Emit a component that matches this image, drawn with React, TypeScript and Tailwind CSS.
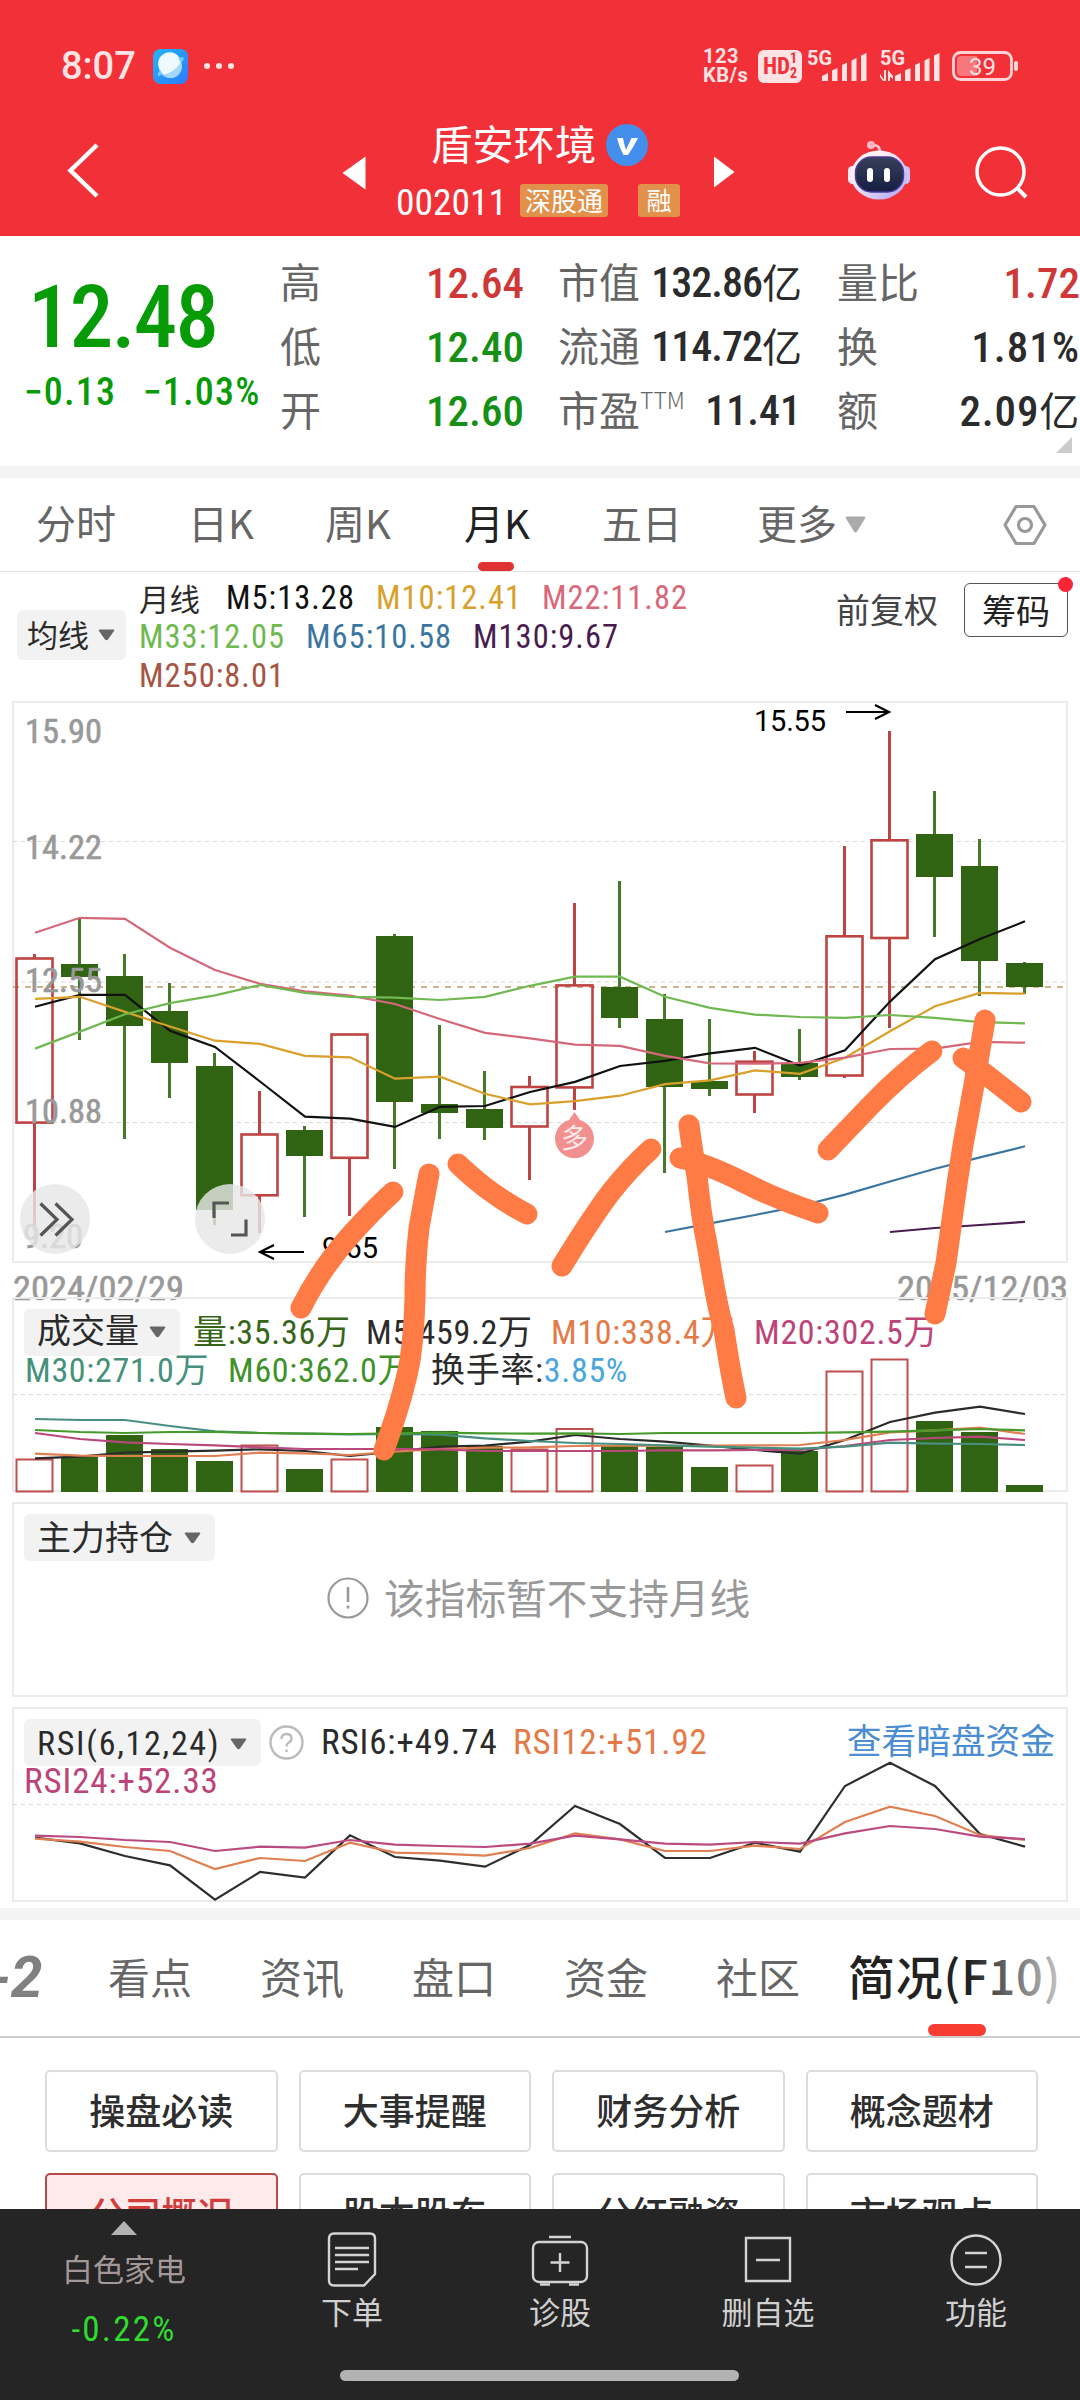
import type { ReactNode } from "react";

type Candle = {
  up: boolean;
  high: number;
  top: number;
  bottom: number;
  low: number;
};

type Legend = { label: string; className: string };

const up = (high: number, top: number, bottom: number, low: number): Candle => ({ up: true, high, top, bottom, low });
const down = (high: number, top: number, bottom: number, low: number): Candle => ({ up: false, high, top, bottom, low });

const candles: Candle[] = [
  up(954, 958.5, 1122.6, 1231),
  down(918, 964, 977, 1040),
  down(954, 976, 1026, 1139),
  down(983, 1011, 1063, 1098),
  down(1053, 1066, 1210, 1225),
  up(1091, 1134.5, 1195.3, 1233),
  down(1126, 1130, 1156, 1217),
  up(1034.5, 1034.5, 1157.8, 1216),
  down(934, 936, 1102, 1169),
  down(1025, 1104, 1113, 1139),
  down(1071, 1109, 1128, 1140),
  up(1076, 1087, 1126.5, 1180),
  up(903, 985.4, 1087.4, 1110),
  down(881, 987, 1018, 1028),
  down(994, 1019, 1087, 1173),
  down(1019, 1081, 1089, 1096),
  up(1051, 1061.7, 1094.5, 1113),
  down(1029, 1063, 1077, 1080),
  up(846, 936.3, 1075.5, 1078),
  up(731, 840.3, 938, 1028),
  down(791, 834, 877, 937),
  down(839, 866, 961, 996),
  down(962, 963, 987, 994),
];

const priceLines = [
  { color: "#111111", from: 0, ys: [1006.7, 994.9, 994.9, 1030.8, 1047, 1081.5, 1116.6, 1118.6, 1126.9, 1106.8, 1106, 1092, 1081.9, 1066, 1060.9, 1053.4, 1047.8, 1065.6, 1050.2, 1001.6, 959.3, 939.1, 921.3] },
  { color: "#d9a02c", from: 0, ys: [998.8, 996.8, 1011.9, 1026.5, 1040.7, 1043.9, 1055.8, 1057.3, 1078.7, 1076.7, 1093.7, 1104.4, 1101.2, 1095.7, 1084.2, 1080.3, 1070.4, 1073.9, 1057.7, 1031.2, 1006.3, 992.9, 993.7] },
  { color: "#d4687a", from: 0, ys: [932.8, 917.8, 918.9, 947.8, 970, 983.8, 991.3, 995.7, 1004, 1019, 1032.8, 1038.4, 1044.7, 1045.9, 1055.8, 1063.3, 1063.7, 1062.9, 1057.7, 1049, 1048.6, 1041.9, 1042.7] },
  { color: "#6fb950", from: 0, ys: [1048.6, 1031.6, 1014.2, 1003.2, 995.3, 985, 992.9, 996.8, 997.6, 1000, 996.8, 985.8, 976.7, 976.7, 996.8, 1007.9, 1014.6, 1017, 1017.8, 1015, 1017.8, 1022.1, 1023.3] },
  { color: "#3b76a0", from: 14, ys: [1232, 1223.4, 1215, 1206, 1194.6, 1181.5, 1168.8, 1157.4, 1146.3] },
  { color: "#4a1c50", from: 19, ys: [1232, 1228, 1225, 1221.8] },
];

const volumeTops = [1459, 1457, 1435, 1449, 1461, 1445, 1469, 1459, 1427, 1431, 1446, 1449, 1428.5, 1446, 1447, 1467, 1465, 1451, 1371, 1359, 1421, 1432, 1485];

const volumeLines = [
  { color: "#2b2b2b", ys: [595, 590, 578, 575, 572, 568, 573, 588, 575, 560, 557, 545, 525, 537, 545, 557, 570, 581, 540, 486, 458, 440, 462] },
  { color: "#e07f52", ys: [581, 587, 588, 588, 588, 578, 580, 585, 575, 567, 563, 562, 558, 557, 558, 557, 556, 555, 540, 517, 511, 503, 522] },
  { color: "#b9497c", ys: [519, 537, 547, 552, 556, 562, 567, 567, 567, 568, 573, 573, 573, 573, 571, 571, 570, 570, 558, 540, 534, 530, 540] },
  { color: "#478f80", ys: [477, 480, 480, 498, 514, 519, 521, 523, 522, 524, 535, 543, 549, 552, 556, 560, 563, 566, 560, 548, 551, 552, 555] },
  { color: "#469a2c", ys: [510, 516, 519, 516, 516, 519, 521, 522, 520, 518, 520, 521, 520, 522, 519, 519, 519, 519, 517, 515, 511, 507, 511] },
].map((line) => ({ ...line, from: 0, ys: line.ys.map((y) => 1260 + y / 3) }));

const rsiLines = [
  { color: "#2e2e2e", ys: [443, 460, 498, 526, 629, 546, 563, 436, 501, 512, 530, 465, 348, 402, 504, 504, 458, 485, 288, 218, 288, 432, 470] },
  { color: "#e07f52", ys: [446, 455, 471, 483, 537, 504, 513, 458, 488, 491, 497, 474, 430, 448, 483, 483, 467, 477, 396, 350, 378, 435, 450] },
  { color: "#bb4a80", ys: [437, 441, 450, 456, 483, 470, 473, 450, 464, 468, 471, 461, 437, 448, 461, 464, 456, 461, 430, 408, 417, 440, 447] },
].map((line) => ({ ...line, from: 0, ys: line.ys.map((y) => 1690 + y / 3) }));

const strokes = [
  "M393 1192 Q372 1211 349 1237 Q320 1270 301 1308",
  "M429 1174 Q423 1205 419 1228 Q415 1262 415 1297 Q414 1335 410 1360 Q404 1395 384 1450",
  "M458 1164 Q490 1195 527 1214",
  "M651 1149 Q630 1168 611 1192 Q590 1220 562 1266",
  "M689 1125 Q693 1155 697 1176 Q701 1215 707 1244 L711 1268 Q718 1310 724 1330 Q730 1370 736 1398",
  "M680 1158 Q705 1163 743 1182 Q778 1200 818 1213",
  "M932 1051 Q900 1075 871 1105 L828 1150",
  "M985 1020 L974 1085 L963 1145 L957 1184 L946 1263 L935 1314",
  "M963 1058 L984 1073 L1021 1102",
];

const periods = [
  { label: "分时", className: "w-[152px]" },
  { label: "日K", className: "w-[137px]" },
  { label: "周K", className: "w-[139px]" },
  { label: "月K", className: "w-[138px] text-[#222]" },
  { label: "五日", className: "w-[155px]" },
];

const maRows: Legend[][] = [
  [
    { label: "M5:13.28", className: "w-[150px] text-[#111]" },
    { label: "M10:12.41", className: "w-[166px] text-[#d9a02c]" },
    { label: "M22:11.82", className: "text-[#d9687a]" },
  ],
  [
    { label: "M33:12.05", className: "w-[167px] text-[#6fb950]" },
    { label: "M65:10.58", className: "w-[167px] text-[#3b76a0]" },
    { label: "M130:9.67", className: "text-[#4a1c50]" },
  ],
  [{ label: "M250:8.01", className: "text-[#a65545]" }],
];

const infoTabs = ["看点", "资讯", "盘口", "资金", "社区"];
const topics = ["操盘必读", "大事提醒", "财务分析", "概念题材", "公司概况", "股本股东", "分红融资", "市场观点"];

const candleX = (i: number) => 34.5 + i * 45;

function Lines({ lines }: { lines: { color: string; from: number; ys: number[] }[] }) {
  return (
    <>
      {lines.map((line) => (
        <polyline
          key={line.color}
          points={line.ys.map((y, i) => `${candleX(line.from + i) + 0.5},${y}`).join(" ")}
          fill="none"
          stroke={line.color}
          strokeWidth={2.2}
        />
      ))}
    </>
  );
}

function Caret() {
  return (
    <svg width="17" height="12" viewBox="0 0 17 12">
      <path d="M1.500 .5H15.500Q17 .5 16 2L10 10.500Q8.500 12 7 10.500L1 2Q0 .5 1.500 .5Z" fill="#666" />
    </svg>
  );
}

function Pill({ children, className }: { children: ReactNode; className: string }) {
  return (
    <div className={`flex h-[47px] items-center justify-between rounded-md bg-[#f2f2f2] pl-[13px] pr-[14px] text-[34px] text-[#2b2b2b] ${className}`}>
      <span className="-mt-[3px] leading-none">{children}</span>
      <Caret />
    </div>
  );
}

function Signal({ data }: { data?: boolean }) {
  return (
    <svg className="overflow-visible" width="60" height="32" viewBox="0 0 60 32" fill="#ffe3e4">
      <text x="0" y="15" fontSize="20" fontWeight="700" textLength="25" lengthAdjust="spacingAndGlyphs">5G</text>
      <path d="M15 31V26L21 23V31ZM25 31V20.500L30.500 18V31ZM35 31V15L40 12.500V31ZM44.500 31V10.500L49.500 8V31ZM54 31V5.500L59.500 3V31Z" />
      {data && <path d="M0 24L4 30V20H6V31H3L0 27ZM8 31V20L13 26V29L10 26.500V31Z" />}
    </svg>
  );
}

function StatusBar() {
  return (
    <div className="flex h-[96px] items-center pl-[61px] pr-[61px] pt-[36px] text-[#ffe3e4]">
      <span className="w-[92px] font-['Roboto'] text-[38px] font-medium leading-none">8:07</span>
      <svg width="35" height="35" viewBox="0 0 35 35">
        <defs>
          <linearGradient id="planet" x1="0" y1="0" x2="1" y2="1">
            <stop offset="0" stopColor="#25b4f8" />
            <stop offset="1" stopColor="#2b7bff" />
          </linearGradient>
        </defs>
        <rect width="35" height="35" rx="7.500" fill="url(#planet)" />
        <circle cx="17.500" cy="17.500" r="11.500" fill="#a4d8fb" />
        <path d="M7 21A11.500 11.500 0 1 1 28 13Q25 18 20 21.500Q14 26 9.500 25Z" fill="#eefaff" />
        <path d="M5 27Q4 25 7 21L9.500 25Q7 27 5 27ZM25 9Q30 7.500 31 9Q31 11 28 14Z" fill="#79cdf9" />
      </svg>
      <div className="ml-[16px] flex gap-[6px]">
        <i className="size-[6px] rounded-full bg-[#ffe3e4]" />
        <i className="size-[6px] rounded-full bg-[#ffe3e4]" />
        <i className="size-[6px] rounded-full bg-[#ffe3e4]" />
      </div>
      <div className="ml-auto flex w-[55px] flex-col font-['Roboto'] text-[20px] font-bold leading-[19px] tracking-[0.500px]">
        <span>123</span>
        <span>KB/s</span>
      </div>
      <div className="flex h-[33px] w-[44px] items-center justify-center rounded-md bg-[#ffe3e4] font-['Roboto_Condensed'] text-[23px] font-bold leading-none text-[#f13038]">
        <span>HD</span>
        <span className="flex flex-col text-[14px] leading-[15px]">
          <span>1</span>
          <span>2</span>
        </span>
      </div>
      <div className="ml-[5px] flex gap-[13px] font-['Roboto']">
        <Signal />
        <Signal data />
      </div>
      <svg className="ml-[12px]" width="67" height="30" viewBox="0 0 67 30">
        <rect x="1.500" y="1.500" width="58" height="27" rx="7" fill="none" stroke="#ffd4d6" strokeWidth="2.800" />
        <path d="M9 5H25V25H9Q5 25 5 21V9Q5 5 9 5Z" fill="#f7777c" />
        <rect x="62" y="10" width="4" height="10" rx="2" fill="#ffd4d6" />
        <text x="30.500" y="23.500" fontSize="24" textAnchor="middle" fill="#ffe3e4" className="font-['Roboto']">39</text>
      </svg>
    </div>
  );
}

function Robot() {
  return (
    <svg width="64" height="60" viewBox="0 0 64 60">
      <defs>
        <linearGradient id="shell" x1="0" y1="0" x2="1" y2="1">
          <stop offset="0.300" stopColor="#fff0f6" />
          <stop offset="0.900" stopColor="#b5aef5" />
        </linearGradient>
        <linearGradient id="visor" x1="0" y1="0" x2="0" y2="1">
          <stop offset="0" stopColor="#38405a" />
          <stop offset="1" stopColor="#151e42" />
        </linearGradient>
      </defs>
      <path d="M24 5Q33 4 33 12" fill="none" stroke="#ffc9d6" strokeWidth="2.500" />
      <circle cx="24" cy="5" r="4" fill="#ffb5c4" />
      <rect x="1" y="26" width="9" height="18" rx="4.500" fill="#f8e6fb" />
      <rect x="54" y="26" width="9" height="18" rx="4.500" fill="#c8c2fb" />
      <ellipse cx="32" cy="35" rx="28" ry="24.500" fill="url(#shell)" />
      <rect x="8.500" y="17" width="48" height="35" rx="16" fill="url(#visor)" stroke="#4a3a9b" strokeWidth="1.500" />
      <rect x="20" y="28" width="6" height="14" rx="3" fill="#fff" />
      <rect x="37" y="28" width="6" height="14" rx="3" fill="#fff" />
    </svg>
  );
}

function TitleBar() {
  return (
    <div className="flex h-[140px] text-white">
      <svg className="ml-[66px] mt-[46px]" width="34" height="56" viewBox="0 0 34 56">
        <path d="M31 3L4.500 28.500L31 54" fill="none" stroke="#fff" strokeWidth="4.500" />
      </svg>
      <svg className="ml-[242px] mt-[60px]" width="24" height="34" viewBox="0 0 24 34">
        <path d="M0.500 17L23.500 .5V33.500Z" fill="#fff" />
      </svg>
      <div className="ml-[30px] mt-[24px] w-[308px]">
        <div className="flex h-[50px] items-center pl-[35px]">
          <span className="-mt-[5px] text-[41.300px] leading-none">盾安环境</span>
          <svg className="ml-[10px]" width="42" height="42" viewBox="0 0 42 42">
            <circle cx="21" cy="21" r="21" fill="#448fec" />
            <path d="M11 14H17Q18 20 20 26Q23 19 25.500 14H32Q27 24 22 31H17.500Q13 23 11 14Z" fill="#fff" />
          </svg>
        </div>
        <div className="mt-[14px] flex h-[33px] items-center">
          <span className="mt-[5px] w-[124px] font-['Roboto_Condensed'] text-[37.500px] leading-none">002011</span>
          <span className="flex h-[33px] w-[88px] items-center justify-center rounded-[3px] bg-[#e2914b] pb-[2px] text-[26px] leading-none">深股通</span>
          <span className="ml-[30px] flex h-[33px] w-[42px] items-center justify-center rounded-[3px] bg-[#e2914b] pb-[2px] text-[25px] leading-none">融</span>
        </div>
      </div>
      <svg className="ml-[10px] mt-[60px]" width="21" height="32" viewBox="0 0 21 32">
        <path d="M20.500 16L0 .5V31.500Z" fill="#fff" />
      </svg>
      <div className="ml-[112px] mt-[44px]">
        <Robot />
      </div>
      <svg className="ml-[64px] mt-[50px]" width="54" height="54" viewBox="0 0 54 54">
        <circle cx="25.500" cy="25.500" r="23.500" fill="none" stroke="#fff" strokeWidth="3.500" />
        <path d="M42 42L51 51" stroke="#fff" strokeWidth="4" />
      </svg>
    </div>
  );
}

function Stat({ label, value, unit, sup, className }: { label: string; value: string; unit?: string; sup?: string; className: string }) {
  return (
    <div className="flex h-[64px] items-center justify-between whitespace-nowrap">
      <span className="-mt-[5px] flex text-[41px] leading-none text-[#666]">
        {label}
        {sup && <sup className="top-0 text-[23px] font-light leading-[22px]">{sup}</sup>}
      </span>
      <span className={`flex items-center font-['Roboto_Condensed','Noto_Sans_CJK_SC',sans-serif] leading-none font-medium ${className}`}>
        {value}
        {unit && <span className="-mt-[5px] font-['Noto_Sans_CJK_SC'] text-[40px] font-normal">{unit}</span>}
      </span>
    </div>
  );
}

function Quote() {
  return (
    <section className="relative flex h-[230px] pt-[15px]">
      <div className="w-[280px] whitespace-nowrap pl-[24px] font-['Roboto_Condensed'] font-medium text-[#079b07]">
        <div className="mt-[23px] pl-[4px] text-[87px] leading-[86px] tracking-[-1.800px]">12.48</div>
        <div className="mt-[10px] flex text-[38px] leading-[44px] tracking-[1.200px]">
          <span className="w-[119px]">−0.13</span>
          <span>−1.03%</span>
        </div>
      </div>
      <div className="w-[244px]">
        <Stat label="高" value="12.64" className="text-[43px] text-[#cf3836]" />
        <Stat label="低" value="12.40" className="text-[43px] text-[#168f16]" />
        <Stat label="开" value="12.60" className="text-[43px] text-[#168f16]" />
      </div>
      <div className="ml-[34px] w-[243px]">
        <Stat label="市值" value="132.86" unit="亿" className="text-[42px] tracking-[-1px] text-[#2b2b2b]" />
        <Stat label="流通" value="114.72" unit="亿" className="text-[42px] tracking-[-1px] text-[#2b2b2b]" />
        <Stat label="市盈" sup="TTM" value="11.41" className="text-[42px] text-[#2b2b2b]" />
      </div>
      <div className="ml-[36px] w-[243px]">
        <Stat label="量比" value="1.72" className="text-[43px] text-[#cf3836]" />
        <Stat label="换" value="1.81%" className="text-[43px] tracking-[1px] text-[#2b2b2b]" />
        <Stat label="额" value="2.09" unit="亿" className="text-[43px] tracking-[0.800px] text-[#2b2b2b]" />
      </div>
      <svg className="absolute bottom-[13px] right-[8px]" width="16" height="16" viewBox="0 0 16 16">
        <path d="M16 0V16H0Z" fill="#ccc" />
      </svg>
    </section>
  );
}

function PeriodTabs() {
  return (
    <nav className="flex h-[94px] items-center border-b-[1.500px] border-[#e4e4e4] pl-[36px] text-[40px] text-[#666]">
      {periods.map((item) => (
        <div key={item.label} className={`relative flex h-[94px] items-center pb-[5px] ${item.className}`}>
          {item.label}
          {item.label === "月K" && <span className="absolute bottom-px left-[14px] h-[9px] w-[36px] rounded-full bg-[#e03232]" />}
        </div>
      ))}
      <span className="pb-[5px]">更多</span>
      <svg className="ml-[8px]" width="21" height="17" viewBox="0 0 21 17">
        <path d="M2 .5H19Q21 .5 20 2.500L12 15.500Q10.500 17.500 9 15.500L1 2.500Q0 .5 2 .5Z" fill="#aaa" />
      </svg>
      <svg className="ml-[137px]" width="44" height="42" viewBox="0 0 44 42" fill="none" stroke="#999" strokeWidth="3.200">
        <path d="M13 2.500H31L42 21L31 39.500H13L2 21Z" strokeLinejoin="round" />
        <circle cx="22" cy="21" r="6.500" />
      </svg>
    </nav>
  );
}

function AverageBar() {
  return (
    <section className="flex h-[130px] pl-[17px]">
      <div className="mt-[39px] flex h-[50px] w-[109px] items-center justify-between rounded-md bg-[#f2f2f2] pl-[10px] pr-[11px] text-[31px] text-[#2b2b2b]">
        <span className="-mt-[3px] leading-none">均线</span>
        <Caret />
      </div>
      <div className="ml-[13px] mt-[8px] w-[697px] font-['Roboto_Condensed'] text-[32.500px] tracking-[1px]">
        {maRows.map((row, i) => (
          <div key={i} className="flex h-[39px] items-center leading-none">
            {i === 0 && <span className="w-[87px] font-['Noto_Sans_CJK_SC'] text-[30.500px] tracking-normal text-[#2b2b2b]">月线</span>}
            {row.map((item) => (
              <span key={item.label} className={item.className}>{item.label}</span>
            ))}
          </div>
        ))}
      </div>
      <span className="mt-[12px] h-[52px] text-[34px] leading-[52px] text-[#444]">前复权</span>
      <div className="relative ml-[26px] mt-[12px] h-[54px] w-[104px] rounded-md border border-[#555] text-center text-[34px] leading-[51px] text-[#222]">
        筹码
        <span className="absolute -right-[6px] -top-[7px] size-[15px] rounded-full bg-[#fb2535]" />
      </div>
    </section>
  );
}

function AxisLabel({ x, y, width, children }: { x: number; y: number; width: number; children: string }) {
  return (
    <text x={x} y={y} textLength={width} lengthAdjust="spacingAndGlyphs" fontSize="34" fill="#999">
      {children}
    </text>
  );
}

function PriceChart() {
  return (
    <svg className="relative block overflow-visible font-['Roboto_Condensed']" width="1080" height="596" viewBox="0 701 1080 596">
      <rect x="13" y="702" width="1054" height="560" fill="none" stroke="#ebebeb" strokeWidth="2" />
      <path d="M13 841.500H1066M13 1122.500H1066" stroke="#d9d9d9" strokeWidth="1" strokeDasharray="4 4" />
      <path d="M13 982H1066" stroke="#ebebeb" strokeWidth="2" strokeDasharray="4 4" />
      <path d="M13 987H1066" stroke="#c09a6a" strokeWidth="1.600" strokeDasharray="6 6" />
      {candles.map((c, i) => {
        const x = candleX(i);
        return c.up ? (
          <g key={i} stroke="#bd4442" fill="none" strokeWidth="2.600">
            <path d={`M${x} ${c.high}V${c.top}M${x} ${c.bottom}V${c.low}`} strokeWidth="3" />
            <rect x={x - 18} y={c.top} width="36" height={c.bottom - c.top} />
          </g>
        ) : (
          <g key={i} fill="#306412">
            <rect x={x - 1.5} y={c.high} width="3" height={c.low - c.high} fill="#457a2a" />
            <rect x={x - 18.5} y={c.top} width="37" height={c.bottom - c.top} />
          </g>
        );
      })}
      <g stroke="#999" strokeWidth="0.600">
        <AxisLabel x={25} y={742.5} width={77}>15.90</AxisLabel>
        <AxisLabel x={25} y={859} width={77}>14.22</AxisLabel>
        <AxisLabel x={25} y={991.5} width={77}>12.55</AxisLabel>
        <AxisLabel x={25} y={1123} width={77}>10.88</AxisLabel>
        <AxisLabel x={23} y={1247.5} width={60}>9.20</AxisLabel>
        <AxisLabel x={13} y={1300} width={171}>2024/02/29</AxisLabel>
        <AxisLabel x={897} y={1300} width={171}>2025/12/03</AxisLabel>
      </g>
      <Lines lines={priceLines} />
      <g fontSize="29" fill="#000" className="font-['Roboto']">
        <text x="754" y="730.500" textLength="72">15.55</text>
        <text x="322" y="1258" textLength="56">9.65</text>
      </g>
      <path d="M846 712H889M875 705L889 712L875 719M304 1252H260M274 1245L260 1252L274 1259" fill="none" stroke="#000" strokeWidth="2.200" />
      <path d="M574.500 1112L580 1120A19.500 19.500 0 1 1 569 1120Z" fill="#f29090" />
      <text x="574.500" y="1148" fontSize="27" textAnchor="middle" fill="#ffe9e9" className="font-['Noto_Sans_CJK_SC']">多</text>
      <g fill="#e6e6e6" fillOpacity="0.820">
        <circle cx="55" cy="1219" r="35" />
        <circle cx="230" cy="1219" r="35" />
      </g>
      <g fill="none" stroke="#555" strokeWidth="3.200">
        <path d="M40.500 1203.500L57 1219.500L40.500 1235.500M55.500 1203.500L72 1219.500L55.500 1235.500" />
        <path d="M229 1203H214V1218M246 1219.500V1235H231" />
      </g>
    </svg>
  );
}

function VolumePanel() {
  return (
    <section className="relative h-[206px] font-['Roboto_Condensed','Noto_Sans_CJK_SC',sans-serif] text-[34px]">
      <svg className="absolute inset-0 overflow-visible" width="1080" height="206" viewBox="0 1297 1080 206">
        <path d="M13 1491V1298H1067V1491Z" fill="none" stroke="#ebebeb" strokeWidth="2" />
        <path d="M13 1394.500H1066" stroke="#d9d9d9" strokeDasharray="4 4" />
        {candles.map((c, i) =>
          c.up ? (
            <rect key={i} x={candleX(i) - 18} y={volumeTops[i] + 0.5} width="36" height={1491 - volumeTops[i]} fill="none" stroke="#bd4f4c" strokeWidth="2" />
          ) : (
            <rect key={i} x={candleX(i) - 18.5} y={volumeTops[i]} width="37" height={1492 - volumeTops[i]} fill="#306412" />
          ),
        )}
        <Lines lines={volumeLines} />
      </svg>
      <div className="relative flex h-[38px] items-center whitespace-nowrap pl-[24px] pt-[32px] leading-none tracking-[0.700px]">
        <Pill className="w-[156px] tracking-normal">成交量</Pill>
        <span className="ml-[13px] w-[173px] text-[#37661a]">量:35.36万</span>
        <span className="w-[185px] text-[#2b2b2b]">M5:459.2万</span>
        <span className="w-[203px] text-[#e47a48]">M10:338.4万</span>
        <span className="text-[#bd4478]">M20:302.5万</span>
      </div>
      <div className="relative mt-[18px] flex h-[34px] items-center whitespace-nowrap pl-[25px] leading-none tracking-[0.700px]">
        <span className="w-[203px] text-[#45917c]">M30:271.0万</span>
        <span className="w-[203px] text-[#3f922a]">M60:362.0万</span>
        <span className="text-[#2b2b2b]">换手率:</span>
        <span className="text-[#4aa7dc]">3.85%</span>
      </div>
    </section>
  );
}

function HoldingPanel() {
  return (
    <section className="mx-[12px] h-[195px] border-2 border-[#ebebeb] pl-[10px] pt-[10px]">
      <Pill className="w-[191px]">主力持仓</Pill>
      <div className="mt-[15px] flex items-center pl-[303px] text-[40.700px] leading-[46px] text-[#999]">
        <svg className="mr-[15px]" width="42" height="42" viewBox="0 0 42 42" fill="none" stroke="#999" strokeWidth="2.200">
          <circle cx="21" cy="21" r="19.500" />
          <path d="M21 10V25M21 28.500V31.500" strokeWidth="2.600" />
        </svg>
        <span className="-mt-[2px]">该指标暂不支持月线</span>
      </div>
    </section>
  );
}

function RsiPanel() {
  return (
    <section className="relative mt-[10px] h-[201px] font-['Roboto_Condensed','Noto_Sans_CJK_SC',sans-serif] text-[35px]">
      <svg className="absolute inset-0" width="1080" height="201" viewBox="0 1707 1080 201">
        <rect x="13" y="1708" width="1054" height="193" fill="none" stroke="#ebebeb" strokeWidth="2" />
        <path d="M13 1804.500H1066" stroke="#d9d9d9" strokeDasharray="4 4" />
        <Lines lines={rsiLines} />
      </svg>
      <div className="relative flex h-[47px] items-center whitespace-nowrap pl-[24px] pt-[24px] leading-none tracking-[0.900px]">
        <Pill className="w-[237px] pt-[3px] tracking-[1.700px]">RSI(6,12,24)</Pill>
        <svg className="ml-[8px]" width="35" height="35" viewBox="0 0 35 35">
          <circle cx="17.500" cy="17.500" r="16" fill="none" stroke="#bbb" strokeWidth="2.400" />
          <path d="M12.500 14Q12.500 9 17.500 9T22.500 13.500Q22.500 16 19.500 17.800Q17.500 19 17.500 21.500M17.500 24.500V27" fill="none" stroke="#bbb" strokeWidth="2.400" />
        </svg>
        <span className="ml-[17px] w-[192px] text-[#2b2b2b]">RSI6:+49.74</span>
        <span className="text-[#e47a48]">RSI12:+51.92</span>
        <span className="ml-auto mr-[25px] text-[34.700px] tracking-normal text-[#4a8dd3]">查看暗盘资金</span>
      </div>
      <div className="relative mt-[10px] pl-[24px] leading-[36px] tracking-[0.900px] text-[#bd4478]">RSI24:+52.33</div>
    </section>
  );
}

function InfoTabs() {
  return (
    <nav className="relative flex h-[118px] items-center overflow-hidden whitespace-nowrap border-b-2 border-[#ccc] pb-[5px] text-[42px] text-[#666]">
      <span className="-ml-[11px] w-[119px] pt-[4px] font-['Roboto'] text-[57px] font-bold italic text-[#808080]">-2</span>
      {infoTabs.map((label) => (
        <span key={label} className="w-[152px]">{label}</span>
      ))}
      <span className="-ml-[20px] text-[47px] font-medium tracking-[0.800px] text-[#222]">简况(F10)</span>
      <span className="absolute inset-y-0 right-0 w-[110px] bg-gradient-to-r from-white/0 to-white/90" />
      <span className="absolute bottom-0 left-[928px] h-[12px] w-[58px] rounded-full bg-[#f93c32]" />
    </nav>
  );
}

function Topics() {
  return (
    <section className="grid h-[171px] grid-cols-4 content-start gap-x-[21px] gap-y-[21px] overflow-hidden pl-[45px] pr-[42px] pt-[32px]">
      {topics.map((label) => (
        <div
          key={label}
          className={`flex h-[82px] items-center justify-center rounded-[5px] border-2 pb-[5px] text-[36px] font-medium ${
            label === "公司概况" ? "border-[#b94a48] bg-[#fdeaea] text-[#d23c3a]" : "border-[#dcdcdc] text-[#2e2e2e]"
          }`}
        >
          {label}
        </div>
      ))}
    </section>
  );
}

function FooterItem({ label, children }: { label: string; children: ReactNode }) {
  return (
    <div className="flex w-[208px] flex-col items-center">
      <svg className="mt-[22px]" width="60" height="60" viewBox="0 0 60 60" fill="none" stroke="#d4d4d4" strokeWidth="2.400">
        {children}
      </svg>
      <span className="mt-[3px] text-[31px] leading-[34px] text-[#d0d0d0]">{label}</span>
    </div>
  );
}

function Footer() {
  return (
    <footer className="relative flex h-[191px] bg-[#252525]">
      <div className="flex w-[248px] flex-col items-center">
        <svg className="mt-[12px]" width="26" height="14" viewBox="0 0 26 14">
          <path d="M13 0L26 14H0Z" fill="#b3b3b3" />
        </svg>
        <span className="mt-[16px] text-[31px] leading-[34px] text-[#a39797]">白色家电</span>
        <span className="mt-[27px] font-['Roboto_Condensed'] text-[35px] leading-[36px] tracking-[2.200px] text-[#2fdc2f]">-0.22%</span>
      </div>
      <FooterItem label="下单">
        <path d="M12 2.500H48Q53 2.500 53 7.500V43L42 54.500H12Q7 54.500 7 49.500V7.500Q7 2.500 12 2.500Z" />
        <path d="M13 17H47M13 24H47M13 31H47M13 38H36" />
      </FooterItem>
      <FooterItem label="诊股">
        <rect x="3" y="11" width="54" height="40" rx="6" />
        <path d="M19 6H41M30 22V41M20.500 31.500H39.500M10 53.500H20M39 53.500H49" />
      </FooterItem>
      <FooterItem label="删自选">
        <path d="M8 7H52V50H8ZM18 29H42" />
      </FooterItem>
      <FooterItem label="功能">
        <circle cx="30" cy="29" r="24.500" />
        <path d="M19 22H41M19 36H41" />
      </FooterItem>
      <span className="absolute bottom-[19px] left-[340px] h-[11px] w-[399px] rounded-full bg-[#b3b3b3]" />
    </footer>
  );
}

export default function App() {
  return (
    <main lang="zh-CN" className="relative h-[2400px] w-[1080px] overflow-hidden bg-white font-['Noto_Sans_CJK_SC',sans-serif]">
      <header className="h-[236px] bg-[#f13038]">
        <StatusBar />
        <TitleBar />
      </header>
      <Quote />
      <div className="h-[12px] bg-[#f4f4f4]" />
      <PeriodTabs />
      <div className="-mt-px">
        <AverageBar />
      </div>
      <PriceChart />
      <VolumePanel />
      <div className="-mt-px">
        <HoldingPanel />
      </div>
      <RsiPanel />
      <div className="h-[12px] bg-[#f4f4f4]" />
      <InfoTabs />
      <Topics />
      <Footer />
      <svg className="pointer-events-none absolute left-0 top-[1000px]" width="1080" height="480" viewBox="0 1000 1080 480">
        {strokes.map((d) => (
          <path key={d} d={d} fill="none" stroke="#ff7b45" strokeWidth="21" strokeLinecap="round" strokeLinejoin="round" />
        ))}
      </svg>
    </main>
  );
}
